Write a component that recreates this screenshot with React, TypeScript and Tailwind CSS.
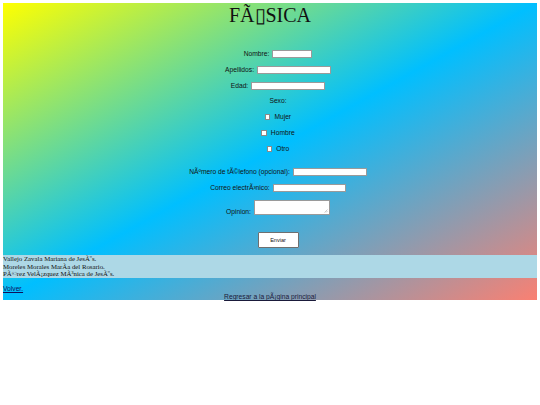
import React from "react";

function Field({ label, width }: { label: string; width: string }) {
  return (
    <div className="flex h-[16px] items-center gap-[3px]">
      <span>{label}</span>
      <input
        type="text"
        className={`h-[8px] ${width} border-[0.5px] border-[#9a9a9a] bg-white`}
      />
    </div>
  );
}

function Check({ label }: { label: string }) {
  return (
    <div className="flex h-[16px] items-center gap-[4px]">
      <span className="block h-[5.5px] w-[5.5px] border-[0.5px] border-[#8a8a8a] bg-white" />
      <span>{label}</span>
    </div>
  );
}

export default function App() {
  return (
    <div className="min-h-[405px] bg-white pt-[3px] font-['Liberation_Sans',Arial,sans-serif] text-[6.7px] leading-[8px] text-[#111]">
      <div className="mx-[3px] w-[534px] bg-[linear-gradient(to_bottom_right,#ffff00,#00bfff,#fa8072)]">
        {/* Form */}
        <div className="h-[252px]">
          <h1 className="h-[24px] text-center font-['Liberation_Serif','Times_New_Roman',serif] text-[20px] leading-[25px] text-[#111]">
            FÃ{"\u25AF"}SICA
          </h1>
          <form className="mt-[19px] flex flex-col items-center pl-[16px]">
            <Field label="Nombre:" width="w-[40px]" />
            <Field label="Apellidos:" width="w-[74px]" />
            <div className="flex h-[15px] items-center gap-[3px]">
              <span>Edad:</span>
              <input type="text" className="h-[8px] w-[74px] border-[0.5px] border-[#9a9a9a] bg-white" />
            </div>
            <div className="flex h-[16px] items-center">Sexo:</div>
            <Check label="Mujer" />
            <Check label="Hombre" />
            <Check label="Otro" />
            <div className="mt-[7px]">
              <Field label="NÃºmero de tÃ©lefono (opcional):" width="w-[74px]" />
            </div>
            <Field label="Correo electrÃ³nico:" width="w-[73px]" />
            <div className="mt-[3px] flex h-[17px] items-end gap-[3px]">
              <span>Opinion:</span>
              <div className="relative mb-[1px] h-[15px] w-[76px] border-[0.5px] border-[#9a9a9a] bg-white">
                <svg className="absolute bottom-[1px] right-[1px]" width="4" height="4" viewBox="0 0 4 4">
                  <path d="M0.5 3.5 L3.5 0.5 M2 3.5 L3.5 2" stroke="#999" strokeWidth="0.5" />
                </svg>
              </div>
            </div>
            <button
              type="button"
              className="mt-[16px] h-[16px] w-[41px] rounded-[1px] border border-[#6f6f6f] bg-white text-[5.5px] text-[#111]"
            >
              Enviar
            </button>
          </form>
        </div>

        {/* Autores */}
        <div className="h-[23px] bg-[#add8e6] font-['Liberation_Serif','Times_New_Roman',serif] text-[6.8px] leading-[7.5px] text-[#111]">
          <p>Vallejo Zavala Mariana de JesÃºs.</p>
          <p>Moreles Morales MarÃa del Rosario.</p>
          <p>PÃ©rez VelÃ¡zquez MÃ³nica de JesÃºs.</p>
        </div>

        {/* Enlaces */}
        <div className="h-[22px] pt-[7px]">
          <a href="#" className="block text-[#10105a] underline">
            Volver.
          </a>
          <a href="#" className="block text-center leading-[7px] text-[#1a1a3a] underline">
            Regresar a la pÃ¡gina principal
          </a>
        </div>
      </div>
    </div>
  );
}
